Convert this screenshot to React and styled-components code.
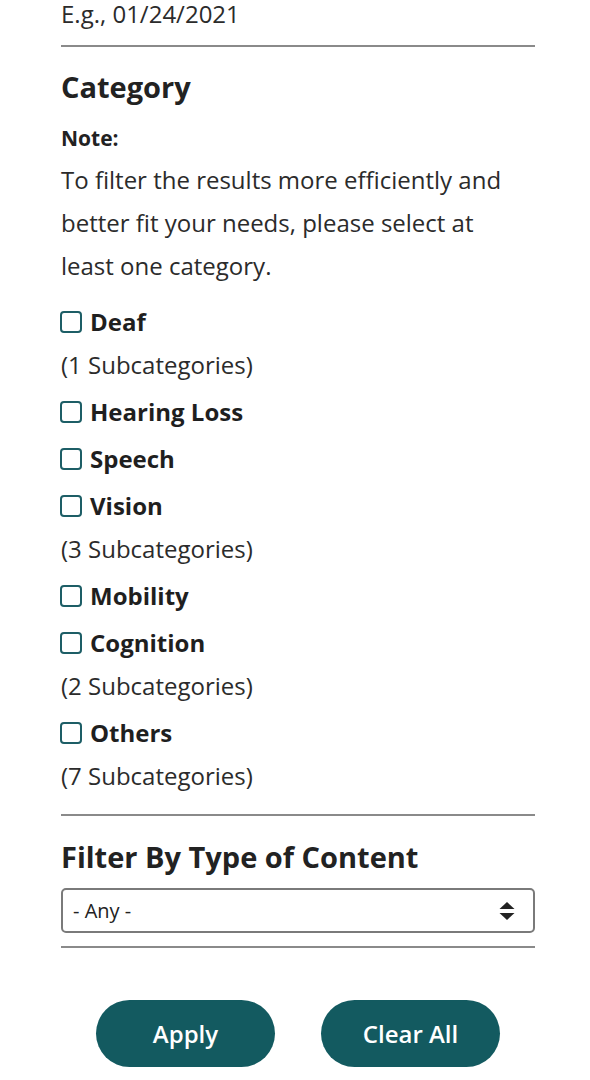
import styled, { createGlobalStyle } from "styled-components";

const GlobalStyle = createGlobalStyle`
  body {
    margin: 0;
    background: #ffffff;
    font-family: "Open Sans", "Noto Sans", sans-serif;
    color: #222222;
  }
`;

const Page = styled.div`
  width: 474px;
  margin: 0 0 0 61px;
  display: flex;
  flex-direction: column;
`;

const Hint = styled.div`
  font-size: 24px;
  line-height: 28px;
  color: #2b2b2b;
`;

const Rule = styled.hr`
  border: none;
  border-top: 2px solid #8a8a8a;
  margin: ${(p) => p.$margin || "0"};
  width: 100%;
`;

const Heading = styled.h2`
  font-size: 29px;
  font-weight: 700;
  line-height: 36px;
  margin: ${(p) => p.$margin || "0"};
  color: #222222;
`;

const NoteLabel = styled.div`
  font-size: 21px;
  font-weight: 700;
  line-height: 28px;
  margin-top: 19px;
`;

const Paragraph = styled.p`
  font-size: 24px;
  line-height: 43px;
  margin: 6px 0 0;
  padding-right: 8px;
  color: #2b2b2b;
`;

const CategoryList = styled.div`
  display: flex;
  flex-direction: column;
  margin-top: 11px;
`;

const CategoryItem = styled.div`
  display: flex;
  flex-direction: column;
`;

const CheckRow = styled.label`
  display: flex;
  align-items: center;
  gap: 8px;
  height: 47px;
  font-size: 24px;
  font-weight: 700;
  color: #1f1f1f;
`;

const Box = styled.span`
  width: 18px;
  height: 18px;
  margin-left: -1px;
  border: 2.5px solid #1d5e66;
  border-radius: 4px;
  flex-shrink: 0;
`;

const SubCount = styled.div`
  font-size: 24px;
  line-height: 40px;
  margin-bottom: 3px;
  color: #2b2b2b;
`;

const SelectBox = styled.div`
  height: 41px;
  border: 2px solid #7a7a7a;
  border-radius: 5px;
  display: flex;
  align-items: center;
  justify-content: space-between;
  padding: 0 18px 0 10px;
  font-size: 20px;
  color: #222222;
  margin-top: 13px;
`;

const Buttons = styled.div`
  display: flex;
  justify-content: center;
  gap: 46px;
  margin-top: 52px;
`;

const Button = styled.button`
  width: 179px;
  height: 67px;
  border: none;
  border-radius: 34px;
  background: #135a60;
  color: #ffffff;
  font-family: "Open Sans", "Noto Sans", sans-serif;
  font-size: 24px;
  font-weight: 600;
  cursor: pointer;
`;

const categories = [
  { name: "Deaf", sub: 1 },
  { name: "Hearing Loss" },
  { name: "Speech" },
  { name: "Vision", sub: 3 },
  { name: "Mobility" },
  { name: "Cognition", sub: 2 },
  { name: "Others", sub: 7 },
];

const Arrows = () => (
  <svg width="16" height="22" viewBox="0 0 16 22">
    <path d="M8 2 L15.5 9 H0.5 Z" fill="#222" />
    <path d="M8 20 L15.5 13 H0.5 Z" fill="#222" />
  </svg>
);

export default function App() {
  return (
    <>
      <GlobalStyle />
      <Page>
        <Hint>E.g., 01/24/2021</Hint>
        <Rule $margin="17px 0 22px" />
        <Heading>Category</Heading>
        <NoteLabel>Note:</NoteLabel>
        <Paragraph>
          To filter the results more efficiently and better fit your needs,
          please select at least one category.
        </Paragraph>
        <CategoryList>
          {categories.map((c) => (
            <CategoryItem key={c.name}>
              <CheckRow>
                <Box />
                {c.name}
              </CheckRow>
              {c.sub && <SubCount>({c.sub} Subcategories)</SubCount>}
            </CategoryItem>
          ))}
        </CategoryList>
        <Rule $margin="15px 0 0" />
        <Heading $margin="23px 0 0">Filter By Type of Content</Heading>
        <SelectBox>
          - Any -
          <Arrows />
        </SelectBox>
        <Rule $margin="13px 0 0" />
        <Buttons>
          <Button>Apply</Button>
          <Button>Clear All</Button>
        </Buttons>
      </Page>
    </>
  );
}
